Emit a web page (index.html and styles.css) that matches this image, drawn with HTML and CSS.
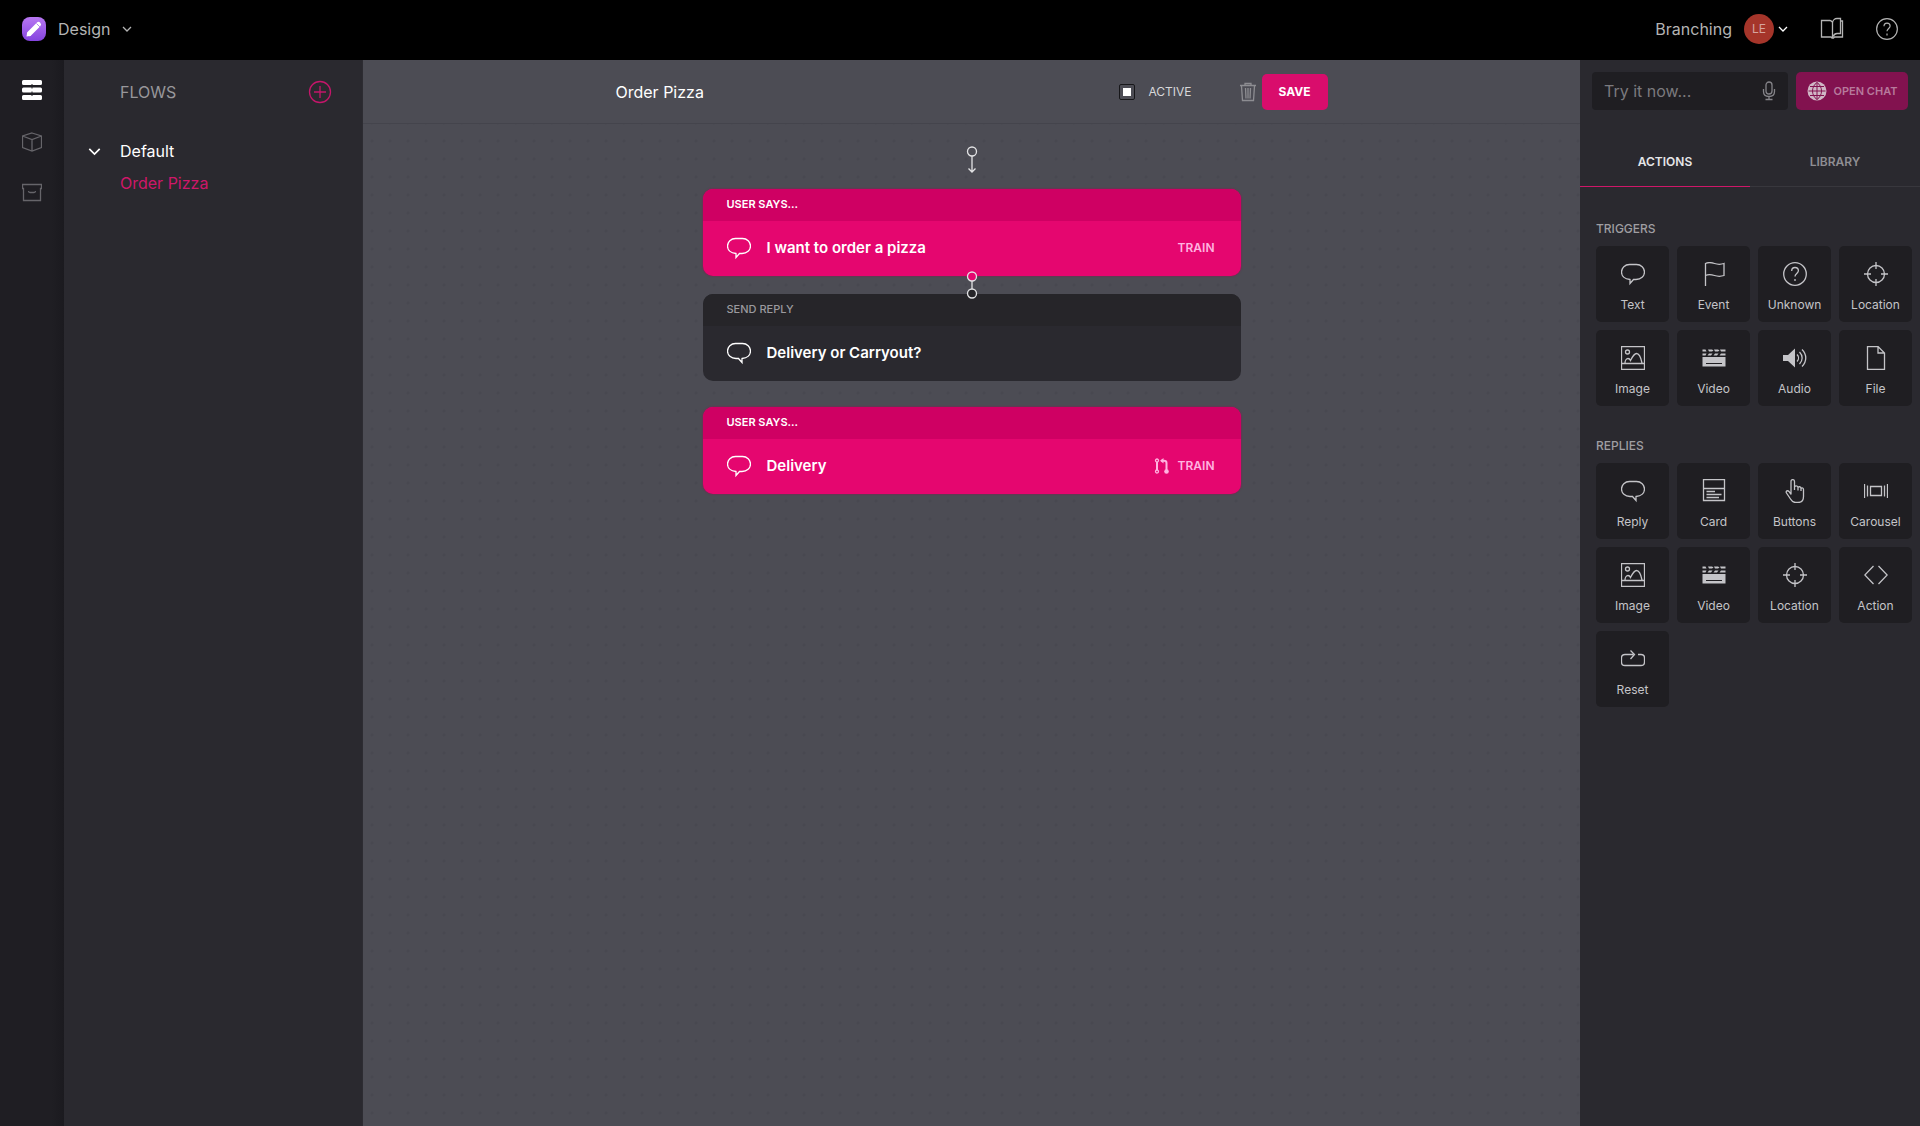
FILE: index.html
```html
<!DOCTYPE html>
<html lang="en">
<head>
    <meta charset="UTF-8">
    <meta name="viewport" content="width=device-width, initial-scale=1.0">
    <title>Order Pizza - Design</title>
    <link rel="stylesheet" href="styles.css">
</head>

<body>
    <!-- icons used more than once -->
    <svg class="sprite" aria-hidden="true">
        <symbol id="i-says" viewBox="0 0 24 24">
            <path d="M12.500 17.500H15C20 17.500 23.500 14.200 23.500 10S20 2.500 15.500 2.500h-7C4 2.500.5 5.800.5 10c0 3.800 3 7 8.500 7.500V21.500z"/>
        </symbol>
        <symbol id="i-reply" viewBox="0 0 24 24">
            <path d="M11.500 17.500H9C4 17.500.5 14.200.5 10S4 2.500 8.500 2.500h7c4.500 0 8 3.300 8 7.500 0 3.800-3 7-8.500 7.500V21.500z"/>
        </symbol>
        <symbol id="i-image" viewBox="0 0 24 24">
            <path d="M.5.5h23v23H.5zM.5 17.500h23M4 17c0-2.500 1.500-4.500 3-4.500s2 .8 2.500 2c1.500-3 3.500-7 6-7s4.500 4.500 5.500 9.500"/>
            <circle cx="6.500" cy="6" r="2"/>
        </symbol>
        <symbol id="i-video" viewBox="0 0 24 24">
            <path class="solid" d="M.5 3.500h3l1 2h-4zM6 3.500h4l1.500 1-1.500 1H7zM12 3.500h4l1.500 1-1.500 1h-3zM18 3.500h5.500v2H19zM.5 7.500h4l-1 2h-3zM7 7.500h3.500l-1.500 2H5.500zM13 7.500h3.500l-1.500 2h-3.500zM19 7.500h4.500v2h-6zM.5 11h23v9.500H.5zM4 17v1h16v-1z"/>
        </symbol>
        <symbol id="i-location" viewBox="0 0 24 24">
            <circle cx="12" cy="12" r="8.500"/>
            <path d="M12 0v7M12 17v7M0 12h7M17 12h7"/>
        </symbol>
        <symbol id="i-help" viewBox="0 0 24 24">
            <circle cx="12" cy="12" r="11.300"/>
            <path d="M8.700 9c0-2.200 1.300-3.500 3.300-3.500s3.400 1.300 3.400 3.200c0 2.600-3.400 2.900-3.400 5.800M12 17v2"/>
        </symbol>
        <symbol id="i-chevron" viewBox="0 0 10 10">
            <path d="M1 3l4 4 4-4"/>
        </symbol>
    </svg>

    <header class="topbar">
        <button class="product" type="button">
            <svg class="logo" viewBox="0 0 24 24" aria-hidden="true">
                <defs>
                    <linearGradient id="logo-bg" x1="0" y1="0" x2="0" y2="1">
                        <stop offset="0" stop-color="#b877f2"/>
                        <stop offset="1" stop-color="#8444df"/>
                    </linearGradient>
                </defs>
                <rect width="24" height="24" rx="8" fill="url(#logo-bg)"/>
                <path d="M7.500 16.500L16.500 7.500" stroke="#fff" stroke-width="5" stroke-linecap="round"/>
                <path d="M4.500 19.500l.8-4.500 3.700 3.700z" fill="#fff"/>
                <path d="M14.500 6.500l3.500 3.500" stroke="#b68aef" stroke-width="1"/>
            </svg>
            Design
            <svg class="icon chevron" aria-hidden="true"><use href="#i-chevron"/></svg>
        </button>
        <div class="account">
            <button class="user" type="button">
                Branching
                <span class="avatar">LE</span>
                <svg class="icon chevron bright" aria-hidden="true"><use href="#i-chevron"/></svg>
            </button>
            <a class="top-link" href="#" aria-label="Docs">
                <svg class="icon icon-24" viewBox="0 0 24 24" aria-hidden="true">
                    <path d="M12 5C11.500 4 11 3.500 10 3.500H1.500v16.500h9.500l1 1h1.500l1-1h8V4h-2M12.500 5v15.500M12.500 6C12.500 3 15 1.500 17 1.500h3.500v15h-3.500c-2 0-3 1-4 3"/>
                </svg>
            </a>
            <a class="top-link" href="#" aria-label="Help">
                <svg class="icon icon-22" aria-hidden="true"><use href="#i-help"/></svg>
            </a>
        </div>
    </header>

    <div class="app">
        <nav class="rail" aria-label="Sections">
            <a class="active" href="#" aria-label="Flows">
                <svg class="icon icon-20" viewBox="0 0 20 20" aria-hidden="true">
                    <path class="solid" d="M1.500 0h17A1.500 1.500 0 0 1 20 1.500v2A1.500 1.500 0 0 1 18.500 5h-8V4h-1v1h-8A1.500 1.500 0 0 1 0 3.500v-2A1.500 1.500 0 0 1 1.500 0zM1.500 7.500h8v1h1v-1h8A1.500 1.500 0 0 1 20 9v2a1.500 1.500 0 0 1-1.500 1.500h-8v-1h-1v1h-8A1.500 1.500 0 0 1 0 11V9a1.500 1.500 0 0 1 1.500-1.500zM1.500 15h8v1h1v-1h8a1.500 1.500 0 0 1 1.500 1.500v2a1.500 1.500 0 0 1-1.500 1.500h-17A1.500 1.500 0 0 1 0 18.500v-2A1.500 1.500 0 0 1 1.500 15z"/>
                </svg>
            </a>
            <a href="#" aria-label="Entities">
                <svg class="icon icon-20" viewBox="0 0 20 20" aria-hidden="true">
                    <path d="M10 1l9.500 3v11.500L10 19 .5 15.500V4zM.5 4L10 7.500 19.500 4M10 7.500V19"/>
                </svg>
            </a>
            <a href="#" aria-label="Archive">
                <svg class="icon icon-20" viewBox="0 0 20 20" aria-hidden="true">
                    <path d="M.5 2.500h19v4h-1v12h-17v-12h-1zM6.500 9c0 1 .5 1.500 1.500 1.500h4c1 0 1.500-.5 1.500-1.500"/>
                </svg>
            </a>
        </nav>

        <aside class="flows">
            <div class="flows-head">
                <h2>FLOWS</h2>
                <button class="add" type="button" aria-label="Add flow">
                    <svg class="icon icon-24" viewBox="0 0 24 24" aria-hidden="true">
                        <circle cx="12" cy="12" r="10.500"/>
                        <path d="M12 6v12M6 12h12"/>
                    </svg>
                </button>
            </div>
            <div class="folder">
                <button class="folder-name" type="button">
                    <svg class="icon toggle" aria-hidden="true"><use href="#i-chevron"/></svg>
                    Default
                </button>
                <a class="flow-link" href="#">Order Pizza</a>
            </div>
        </aside>

        <main class="canvas">
            <div class="toolbar">
                <div class="toolbar-inner">
                    <h1>Order Pizza</h1>
                    <label class="switch">
                        <input type="checkbox" checked>
                        ACTIVE
                    </label>
                    <button class="trash" type="button" aria-label="Delete flow">
                        <svg class="icon icon-20" viewBox="0 0 20 20" aria-hidden="true">
                            <path d="M2 3.500h16M7 3V1.500h6V3M3.500 4l1 14.500h11l1-14.500M7.500 6l.5 10.500M10 6v10.500M12.500 6L12 16.500"/>
                        </svg>
                    </button>
                    <button class="save" type="button">SAVE</button>
                </div>
            </div>

            <div class="steps">
                <svg class="start" viewBox="0 0 12 28" aria-hidden="true">
                    <circle cx="6" cy="5.500" r="4.500"/>
                    <path d="M6 10v16M2.500 22.500L6 26l3.500-3.500"/>
                </svg>

                <section class="step says">
                    <h3>USER SAYS…</h3>
                    <div class="step-body">
                        <svg class="icon icon-24" aria-hidden="true"><use href="#i-says"/></svg>
                        <p>I want to order a pizza</p>
                        <button class="train" type="button">TRAIN</button>
                    </div>
                    <svg class="link" viewBox="0 0 12 28" aria-hidden="true">
                        <path d="M6 10v8"/>
                        <circle class="from" cx="6" cy="5.500" r="4.500"/>
                        <circle class="to" cx="6" cy="22.500" r="4.500"/>
                    </svg>
                </section>

                <section class="step reply">
                    <h3>SEND REPLY</h3>
                    <div class="step-body">
                        <svg class="icon icon-24" aria-hidden="true"><use href="#i-reply"/></svg>
                        <p>Delivery or Carryout?</p>
                    </div>
                </section>

                <section class="step says branch">
                    <h3>USER SAYS…</h3>
                    <div class="step-body">
                        <svg class="icon icon-24" aria-hidden="true"><use href="#i-says"/></svg>
                        <p>Delivery</p>
                        <svg class="icon merge" viewBox="0 0 16 16" aria-hidden="true">
                            <circle cx="3" cy="2.500" r="1.500"/>
                            <circle cx="3" cy="13.500" r="1.500"/>
                            <circle class="solid" cx="12.500" cy="13.500" r="2.300"/>
                            <path class="thick" d="M3 4v8M12.500 13V5c0-1.500-.8-2.300-2.500-2.300H7"/>
                            <path class="solid" d="M6 2.700L9.500 0v5.400z"/>
                        </svg>
                        <button class="train" type="button">TRAIN</button>
                    </div>
                </section>
            </div>
        </main>

        <aside class="panel">
            <form class="try">
                <div class="try-box">
                    <input type="text" placeholder="Try it now..." aria-label="Try it now">
                    <button class="mic" type="button" aria-label="Speak">
                        <svg class="icon icon-20" viewBox="0 0 20 20" aria-hidden="true">
                            <rect x="7" y="1" width="6" height="12" rx="3"/>
                            <path d="M4.500 8v2.500c0 3.200 2.300 5 5.500 5s5.500-1.800 5.500-5V8M10 15.500v3M6.500 18.500h7"/>
                        </svg>
                    </button>
                </div>
                <button class="chat" type="button">
                    <svg class="icon icon-20" viewBox="0 0 20 20" aria-hidden="true">
                        <circle class="globe" cx="10" cy="10" r="9.500"/>
                        <path class="grid" d="M10 1.500v17M1.500 10h17M3 5.500h14M3 14.500h14M10 1.500C4 5.500 4 14.500 10 18.500M10 1.500c6 4 6 13 0 17"/>
                    </svg>
                    OPEN CHAT
                </button>
            </form>

            <div class="tabs" role="tablist">
                <button class="active" type="button" role="tab" aria-selected="true">ACTIONS</button>
                <button type="button" role="tab" aria-selected="false">LIBRARY</button>
            </div>

            <section class="group">
                <h2>TRIGGERS</h2>
                <div class="tiles">
                    <button type="button"><svg class="icon icon-24" aria-hidden="true"><use href="#i-says"/></svg>Text</button>
                    <button type="button">
                        <svg class="icon icon-24" viewBox="0 0 24 24" aria-hidden="true">
                            <path d="M3.500 24V1.500c3-1.500 6-1 9 0s6.500 1 9.500 0v12c-3 1-6.500 1-9.500 0s-6-1.500-9 0"/>
                        </svg>Event
                    </button>
                    <button type="button"><svg class="icon icon-24" aria-hidden="true"><use href="#i-help"/></svg>Unknown</button>
                    <button type="button"><svg class="icon icon-24" aria-hidden="true"><use href="#i-location"/></svg>Location</button>
                    <button type="button"><svg class="icon icon-24" aria-hidden="true"><use href="#i-image"/></svg>Image</button>
                    <button type="button"><svg class="icon icon-24" aria-hidden="true"><use href="#i-video"/></svg>Video</button>
                    <button type="button">
                        <svg class="icon icon-24" viewBox="0 0 24 24" aria-hidden="true">
                            <path class="solid" d="M0 9h5l7-6.500v19L5 15H0z"/>
                            <path d="M14 8.500c2 2 2 5 0 7M16.500 6c3.500 3.500 3.500 8.500 0 12M19 3.500c5 5 5 12 0 17"/>
                        </svg>Audio
                    </button>
                    <button type="button">
                        <svg class="icon icon-24" viewBox="0 0 24 24" aria-hidden="true">
                            <path d="M3.500.5H14l6.500 6.500v16.500h-17zM14 .5V7h6.500"/>
                        </svg>File
                    </button>
                </div>
            </section>

            <section class="group">
                <h2>REPLIES</h2>
                <div class="tiles">
                    <button type="button"><svg class="icon icon-24" aria-hidden="true"><use href="#i-reply"/></svg>Reply</button>
                    <button type="button">
                        <svg class="icon icon-24" viewBox="0 0 24 24" aria-hidden="true">
                            <path d="M1.500.5h21v21h-21zM1.500 9.500h21M4.500 12.500H13M4.500 15.500h15M4.500 18.500H17"/>
                        </svg>Card
                    </button>
                    <button type="button">
                        <svg class="icon icon-24" viewBox="0 0 24 24" aria-hidden="true">
                            <path d="M8 15.500V2.500C8 0 11.500 0 11.500 2.500V11M11.500 8.500c0-2.500 3.500-2 3.500 0v3M15 9c0-2 3-1.500 3 .5v2.500M18 10c0-1.500 2.500-1.500 2.500.5v7c0 4-2 6-5.500 6h-2.500c-2.500 0-3.500-1-5-3.500L3.500 14c-1-2 1-3 2.500-1.500l2 3"/>
                        </svg>Buttons
                    </button>
                    <button type="button">
                        <svg class="icon icon-24" viewBox="0 0 24 24" aria-hidden="true">
                            <path d="M6.500 7.500h11v9h-11zM.5 5v14M3.500 6.500v11M20.500 6.500v11M23.500 5v14"/>
                        </svg>Carousel
                    </button>
                    <button type="button"><svg class="icon icon-24" aria-hidden="true"><use href="#i-image"/></svg>Image</button>
                    <button type="button"><svg class="icon icon-24" aria-hidden="true"><use href="#i-video"/></svg>Video</button>
                    <button type="button"><svg class="icon icon-24" aria-hidden="true"><use href="#i-location"/></svg>Location</button>
                    <button type="button">
                        <svg class="icon icon-24" viewBox="0 0 24 24" aria-hidden="true">
                            <path d="M9.500 3L.8 12l8.700 9M14.500 3l8.700 9-8.700 9"/>
                        </svg>Action
                    </button>
                    <button type="button">
                        <svg class="icon icon-24" viewBox="0 0 24 24" aria-hidden="true">
                            <path d="M17 7.500h3c2.500 0 3.500 1 3.500 3.500v4c0 2.500-1 3.500-3.500 3.500H4C1.500 18.500.5 17.500.5 15v-4c0-2.500 1-3.500 3.500-3.500h8.500M9.500 3.500l4 4-4 4.500"/>
                        </svg>Reset
                    </button>
                </div>
            </section>
        </aside>
    </div>
</body>
</html>
```
FILE: styles.css
```css
* {
    box-sizing: border-box;
}
body, h1, h2, h3, p {
    margin: 0;
}
body {
    display: flex;
    flex-direction: column;
    min-height: 100vh;
    font-family: Inter, "Open Sans", sans-serif;
    font-size: 16px;
    line-height: 20px;
    color: #fff;
    background: #2a292f;
}
h1, h2, h3 {
    font-size: 16px;
    font-weight: 400;
}
button, input {
    padding: 0;
    border: 0;
    font: inherit;
    color: inherit;
    background: none;
}
button {
    cursor: pointer;
}
a {
    color: inherit;
    text-decoration: none;
}

/* icons */
.sprite {
    display: none;
}
.icon {
    display: block;
    flex: none;
    fill: none;
    stroke: currentColor;
    stroke-width: 1.3;
}
.solid {
    fill: currentColor;
    fill-rule: evenodd;
    stroke: none;
}
.icon-20 {
    width: 20px;
    height: 20px;
}
.icon-22 {
    width: 22px;
    height: 22px;
}
.icon-24 {
    width: 24px;
    height: 24px;
}
.chevron {
    width: 10px;
    height: 10px;
}
.bright {
    color: #fff;
}

/* top bar */
.topbar {
    display: flex;
    justify-content: space-between;
    align-items: center;
    height: 60px;
    padding: 0 22px 2px;
    color: #b4b4b4;
    background: #000;
}
.product, .user, .account {
    display: flex;
    align-items: center;
}
.product {
    gap: 12px;
}
.logo {
    width: 24px;
    height: 24px;
}
.account {
    gap: 32px;
}
.user {
    gap: 4px;
}
.avatar {
    width: 30px;
    margin-left: 8px;
    border-radius: 50%;
    font-size: 12px;
    line-height: 30px;
    text-align: center;
    color: #d6a49f;
    background: #a5352a;
}

/* columns */
.app {
    display: grid;
    flex: 1;
    grid-template-columns: 64px 299px 1fr 340px;
}
.rail {
    display: flex;
    flex-direction: column;
    align-items: center;
    gap: 30px;
    padding-top: 20px;
    color: #66656a;
    background: linear-gradient(to right, #1f1e23 80%, #1b1a1f);
}
.rail .active {
    margin-bottom: 2px;
    color: #fff;
}

/* flows list */
.flows {
    padding: 20px 30px 0 24px;
    border-right: 1px solid #2d2c32;
}
.flows-head {
    display: flex;
    justify-content: space-between;
    align-items: center;
    padding-left: 32px;
    color: #98979b;
}
.add {
    color: #c4166a;
}
.folder {
    padding-top: 37px;
}
.folder-name {
    display: flex;
    align-items: center;
    gap: 19px;
}
.toggle {
    width: 13px;
    height: 13px;
}
.flow-link {
    display: block;
    padding: 12px 0 0 32px;
    color: #cf1769;
}

/* canvas */
.canvas {
    background-color: #4c4c54;
    background-image: radial-gradient(circle, #484850 1px, transparent 2px);
    background-size: 18px 18px;
}
.toolbar {
    padding: 13px 20px 12px;
    border-bottom: 1px solid #44444c;
    background: #4c4c54;
}
.toolbar-inner {
    display: flex;
    align-items: center;
    max-width: 712px;
    margin: 0 auto;
}
.toolbar h1 {
    flex: 1;
}
.switch {
    display: flex;
    align-items: center;
    gap: 13px;
    font-size: 12px;
    color: #d8d8da;
}
.switch input {
    appearance: none;
    width: 16px;
    height: 16px;
    margin: 0;
    border: 1px solid #17171a;
    border-radius: 2px;
}
.switch input:checked {
    background: #fff content-box;
    padding: 3px;
}
.trash {
    margin: 0 4px 0 46px;
    color: #8d8d92;
}
.save {
    padding: 8px 17px;
    border-radius: 5px;
    font-size: 12px;
    font-weight: 700;
    background: #d90d6c;
}
.toolbar-inner {
    min-height: 38px;
}

/* steps */
.steps {
    display: flex;
    flex-direction: column;
    align-items: center;
    padding: 22px 20px;
}
.start, .link {
    width: 12px;
    height: 28px;
    fill: none;
    stroke: #e3e3e5;
    stroke-width: 1.3;
}
.start {
    margin-bottom: 15px;
}
.step {
    position: relative;
    width: 100%;
    max-width: 538px;
    border-radius: 10px;
}
.step h3 {
    padding: 5px 24px 7px;
    border-radius: 10px 10px 0 0;
    font-size: 11px;
    font-weight: 600;
}
.step-body {
    display: flex;
    align-items: center;
    gap: 16px;
    padding: 15px 26px 16px 24px;
}
.step-body p {
    flex: 1;
    font-size: 15px;
    font-weight: 600;
    line-height: 24px;
}
.says {
    background: #e5066f;
    box-shadow: 0 0 2px #9c0a50;
}
.says h3 {
    background: #cf0063;
}
.reply {
    margin-top: 18px;
    background: #2a292f;
}
.reply h3 {
    font-weight: 500;
    color: #9b9a9e;
    background: #262529;
}
.branch {
    margin-top: 26px;
}
.train {
    font-size: 12px;
    font-weight: 600;
    color: #ffb3e0;
}
.merge {
    width: 16px;
    height: 16px;
    margin-right: -8px;
    color: #ffb3e0;
}
.merge .thick {
    stroke-width: 2;
}

/* connector drawn over both cards */
.link {
    position: absolute;
    z-index: 1;
    bottom: -23px;
    left: calc(50% - 6px);
}
.link .from {
    fill: #e5066f;
}
.link .to {
    fill: #262529;
}

/* right panel */
.panel {
    min-width: 0;
}
.try {
    display: flex;
    gap: 8px;
    padding: 12px 12px 0;
}
.try-box {
    display: flex;
    flex: 1;
    align-items: center;
    min-width: 0;
    padding: 0 9px 0 12px;
    border-radius: 4px;
    background: #1f1e22;
}
.try-box input {
    flex: 1;
    min-width: 0;
    outline: 0;
}
.try-box input::placeholder {
    color: #7b7a7e;
}
.mic {
    color: #858489;
}
.chat {
    display: flex;
    flex: none;
    justify-content: center;
    align-items: center;
    gap: 7px;
    width: 112px;
    height: 38px;
    border-radius: 5px;
    font-size: 11px;
    font-weight: 600;
    color: #b77a9c;
    background: #82124f;
}
.globe {
    fill: #d0b8c6;
    stroke: none;
}
.grid {
    stroke: #82124f;
    stroke-width: 1;
}
.tabs {
    display: grid;
    grid-template-columns: 1fr 1fr;
    margin-top: 27px;
    font-size: 12px;
    font-weight: 600;
    color: #8f8e93;
}
.tabs button {
    padding: 15px 0 14px;
    border-bottom: 1px solid #38373d;
}
.tabs .active {
    color: #e6e6e8;
    border-color: #cf1769;
}
.group {
    padding: 32px 8px 0 16px;
}
.group h2 {
    margin-bottom: 7px;
    font-size: 12px;
    font-weight: 500;
    color: #9f9ea2;
}
.tiles {
    display: grid;
    grid-template-columns: repeat(4, 1fr);
    gap: 8px;
}
.tiles button {
    display: flex;
    flex-direction: column;
    align-items: center;
    gap: 9px;
    padding: 16px 0 7px;
    border-radius: 5px;
    font-size: 12px;
    color: #c4c4c8;
    background: #1f1e22;
}
.group + .group {
    padding-top: 30px;
}
```
